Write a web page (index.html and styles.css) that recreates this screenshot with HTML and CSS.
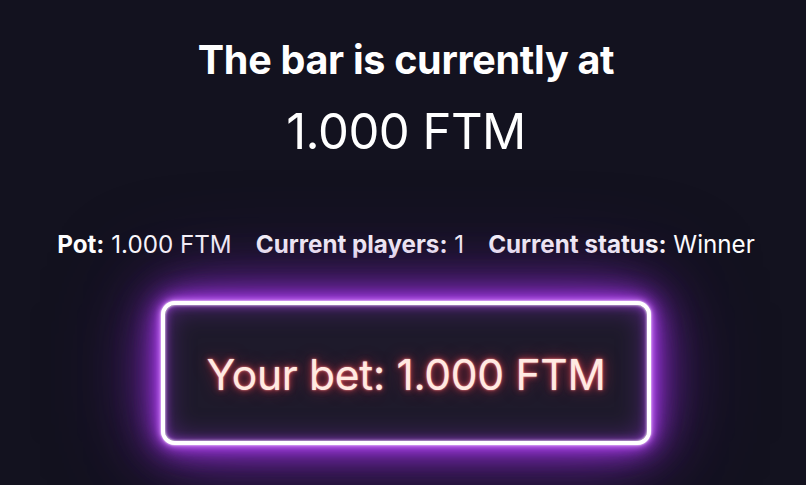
FILE: index.html
```html
<!DOCTYPE html>
<html>
<head>
<meta charset="utf-8">
<link rel="stylesheet" href="styles.css">
</head>
<body>
<main class="page">
  <h1 class="title">The bar is currently at</h1>
  <div class="bar-value">1.000 FTM</div>
  <div class="stats">
    <span class="stat"><b>Pot:</b> 1.000 FTM</span>
    <span class="stat"><b>Current players:</b> 1</span>
    <span class="stat"><b>Current status:</b> Winner</span>
  </div>
  <div class="bet-box">
    <span class="bet-text">Your bet: 1.000 FTM</span>
  </div>
</main>
</body>
</html>
```
FILE: styles.css
```css
html, body {
  margin: 0;
  padding: 0;
  background: #13121f;
  height: 100%;
  overflow: hidden;
}
.page {
  display: flex;
  flex-direction: column;
  align-items: center;
  font-family: Inter, "Noto Sans", sans-serif;
  color: #ffffff;
  padding-top: 36px;
  padding-left: 6px;
}
.title {
  margin: 0;
  font-size: 39.5px;
  font-weight: 700;
  line-height: 48px;
  letter-spacing: -0.3px;
}
.bar-value {
  margin-top: 18px;
  font-size: 49px;
  font-weight: 400;
  line-height: 60px;
  letter-spacing: -0.5px;
}
.stats {
  margin-top: 68px;
  display: flex;
  gap: 24px;
  font-size: 24.2px;
  line-height: 30px;
  letter-spacing: 0;
}
.stat b {
  font-weight: 700;
}
.bet-box {
  margin-top: 41px;
  width: 482px;
  height: 136px;
  border: 4px solid #fff;
  border-radius: 14px;
  display: flex;
  align-items: center;
  justify-content: center;
  box-shadow:
    0 0 2px #fff,
    0 0 6px #e0a0ff,
    0 0 14px #b545f5,
    0 0 26px #a038e0,
    0 0 44px #8a2fc8,
    0 0 70px rgba(120, 40, 180, 0.85),
    0 0 110px rgba(90, 30, 140, 0.6),
    inset 0 0 3px #fff,
    inset 0 0 10px #9a45d4,
    inset 0 0 28px #55287e;
  background: #1e1a2b;
}
.bet-text {
  padding-top: 2px;
  font-size: 42.5px;
  font-weight: 400;
  color: #ffeae2;
  letter-spacing: -0.3px;
  text-shadow:
    0 0 2px #ff9a9a,
    0 0 6px #d0404a,
    0 0 16px #8a2030;
}
```
